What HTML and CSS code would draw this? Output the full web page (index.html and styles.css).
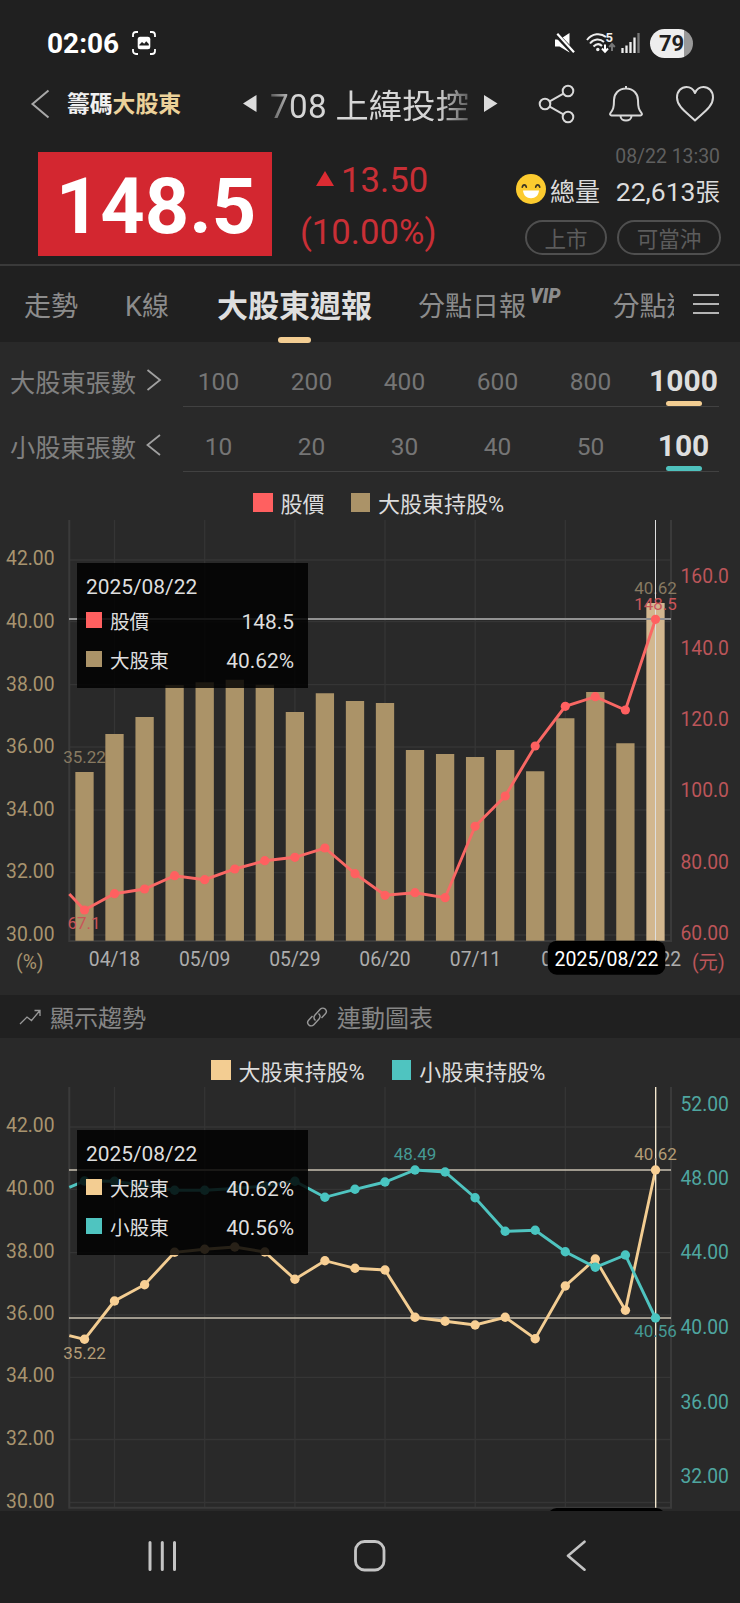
FILE: index.html
```html
<!DOCTYPE html>
<html lang="zh-Hant">
<head>
<meta charset="UTF-8">
<meta name="viewport" content="width=device-width, initial-scale=1">
<title>籌碼大股東</title>
<link rel="stylesheet" href="styles.css">
</head>
<body>
<div class="statusbar">
  <span class="clock">02:06</span>
  <svg class="shot-icon" width="24" height="24" viewBox="0 0 24 24">
    <path d="M1 6V4a3 3 0 0 1 3-3h2M18 1h2a3 3 0 0 1 3 3v2M23 18v2a3 3 0 0 1-3 3h-2M6 23H4a3 3 0 0 1-3-3v-2" fill="none" stroke="#fff" stroke-width="1.8"/>
    <rect x="5.7" y="5.8" width="12.6" height="12.4" rx="2.5" fill="#fff"/>
    <path d="M7.3 13.8l2.7-2.9 2.2 1.8 2-2.5 2.6 2.7v1.7H7.3z" fill="#202020"/>
  </svg>
  <div class="status-right">
    <svg width="20" height="22" viewBox="0 0 20 22">
      <path d="M0 7.5h4.5L14.5 1v19.5L4.5 14.5H0z" fill="#fff"/>
      <path d="M-1 0L18 20" stroke="#202020" stroke-width="5"/>
      <path d="M2.3 1.8L19 20.3" stroke="#fff" stroke-width="2.2"/>
    </svg>
    <svg class="wifi" width="31" height="22" viewBox="0 0 31 22">
      <path d="M1 8C6 1 15 .8 20 5M4 11.5c4-5 10-5 14-1.5M7.5 14.5c3-3 6-3 8.5-.5" fill="none" stroke="#eee" stroke-width="2"/>
      <circle cx="11.8" cy="17.5" r="1.7" fill="#eee"/>
      <path d="M19 12.5v6.5M16 16.5l3 3.3 3-3.3" fill="none" stroke="#fff" stroke-width="2"/>
      <path d="M26 19v-6.5M23.2 15l2.8-3 2.8 3" fill="none" stroke="#777" stroke-width="2"/>
      <text x="19.5" y="10" class="wifi-num">5</text>
    </svg>
    <svg class="signal" width="19" height="20" viewBox="0 0 19 20">
      <path d="M1.5 15v5M5.5 12.5V20M9.5 9v11M13.5 4.5V20" stroke="#eee" stroke-width="2.3"/>
      <path d="M17.5 0v20" stroke="#777" stroke-width="2.3"/>
    </svg>
    <span class="battery">79</span>
  </div>
</div>

<div class="titlebar">
  <svg class="back" width="20" height="30" viewBox="0 0 20 30"><path d="M18.500 1.500L2.500 15l16 13.500" fill="none" stroke="#a8a8a8" stroke-width="2"/></svg>
  <div class="logo">籌碼<span>大股東</span></div>
  <svg class="prev" width="14" height="17" viewBox="0 0 14 17"><path d="M0 8.500L13.500 0v17z" fill="#dcdcdc"/></svg>
  <div class="stock-name">708 上緯投控</div>
  <svg class="next" width="14" height="17" viewBox="0 0 14 17"><path d="M13.500 8.500L0 0v17z" fill="#dcdcdc"/></svg>
  <svg class="share" width="38" height="40" viewBox="0 0 38 40" fill="none" stroke="#d8d8d8" stroke-width="2">
    <circle cx="7" cy="20" r="5.300"/><circle cx="30" cy="7" r="5.300"/><circle cx="30" cy="33" r="5.300"/>
    <path d="M11.700 17.400l13.700-7.700M11.700 22.600l13.700 7.700"/>
  </svg>
  <svg class="bell" width="34" height="38" viewBox="0 0 34 38" fill="none" stroke="#d8d8d8" stroke-width="2" stroke-linejoin="round">
    <path d="M17 3.500C9.500 3.500 5 9 5 15c0 8-1 9.500-3.500 13-.8 1.300-.3 2.500 1 2.500h29c1.300 0 1.800-1.200 1-2.500C30 24.500 29 23 29 15c0-6-4.500-11.500-12-11.500zM17 3.500V1M11.500 31c0 6 11 6 11 0"/>
  </svg>
  <svg class="heart" width="40" height="38" viewBox="0 0 40 38" fill="none" stroke="#d8d8d8" stroke-width="2" stroke-linejoin="round">
    <path d="M20 35.500C11 27 2 21.500 2 12.500 2 6 6.500 2 11.500 2c4 0 7 2.500 8.500 6 1.500-3.500 4.500-6 8.500-6C33.500 2 38 6 38 12.500 38 21.500 29 27 20 35.500z"/>
  </svg>
</div>

<div class="quote">
  <div class="price">148.5</div>
  <div class="change">
    <div><i class="up"></i>13.50</div>
    <div class="pct">(10.00%)</div>
  </div>
  <div class="info">
    <div class="time">08/22 13:30</div>
    <div class="volume">
      <svg width="30" height="30" viewBox="0 0 30 30">
        <circle cx="15" cy="15" r="15" fill="#fccb2f"/>
        <path d="M6.300 13.200c.6-3 3.400-3 4 0M19.700 13.200c.6-3 3.400-3 4 0" fill="none" stroke="#3d3523" stroke-width="1.700" stroke-linecap="round"/>
        <path d="M7 16.500h16c-.5 5-3.500 7.700-8 7.700s-7.500-2.700-8-7.700z" fill="#fff"/>
      </svg>
      <span>總量</span><span class="vol-num"><b>22,613</b>張</span>
    </div>
    <div class="tags"><span class="tag">上市</span><span class="tag wide">可當沖</span></div>
  </div>
</div>

<div class="tabs">
  <span class="tab t1">走勢</span>
  <span class="tab t2">K線</span>
  <span class="tab t3 active">大股東週報</span>
  <span class="tab t4">分點日報<sup>VIP</sup></span>
  <span class="tab t5">分點進出</span>
  <svg class="menu" width="28" height="20" viewBox="0 0 28 20"><path d="M1 1h26M1 10h26M1 19h26" stroke="#b4b4b4" stroke-width="2"/></svg>
</div>

<div class="selectors">
  <div class="selector">
    <span class="sel-label">大股東張數</span>
    <svg class="chev" width="16" height="22" viewBox="0 0 16 22"><path d="M1.500 1l12.500 10L1.500 21" fill="none" stroke="#a0a0a0" stroke-width="1.800"/></svg>
    <div class="track">
      <span>100</span><span>200</span><span>400</span><span>600</span><span>800</span><span class="on gold">1000</span>
    </div>
  </div>
  <div class="selector">
    <span class="sel-label">小股東張數</span>
    <svg class="chev" width="16" height="22" viewBox="0 0 16 22"><path d="M14 1L1.500 11 14 21" fill="none" stroke="#a0a0a0" stroke-width="1.800"/></svg>
    <div class="track">
      <span>10</span><span>20</span><span>30</span><span>40</span><span>50</span><span class="on teal">100</span>
    </div>
  </div>
</div>

<div class="legend first">
  <i class="box red"></i><span>股價</span>
  <i class="box tan"></i><span>大股東持股%</span>
</div>
<div class="chart chart1">
  <svg width="740" height="474" viewBox="0 0 740 474">
    <g class="grid">
      <path d="M70 40h600M70 101.700h600M70 164.700h600M70 227h600M70 290h600M70 352.700h600M70 415h600"/>
      <path d="M114.500 0v420M204.700 0v420M294.900 0v420M385 0v420M475.200 0v420M565.300 0v420"/>
    </g>
    <path class="axis" d="M69.300 0v421H671V0"/>
    <g class="val tan-dim"><text x="84.500" y="243.300">35.22</text><text x="655.500" y="74">40.62</text></g>
    <g class="bars">
      <path d="M84.500 252V420.700M114.500 214V420.700M144.600 197V420.700M174.600 165V420.700M204.700 162.300V420.700M234.800 159.700V420.700M264.800 164.700V420.700M294.900 192V420.700M324.900 173.300V420.700M355 181V420.700"/>
      <path d="M385 183V420.700M415 230V420.700M445.100 234V420.700M475.100 237V420.700M505.200 230V420.700M535.200 251.300V420.700M565.300 198.300V420.700M595.300 172V420.700M625.400 223.300V420.700"/>
      <path class="hot" d="M655.500 83V420.700"/>
    </g>
    <path class="cursor-h" d="M69 99H671"/>
    <path class="cursor-v" d="M655.500 0V420.700"/>
    <polyline class="line red-line" points="69.300,374 84.500,390 114.500,373.700 144.600,369 174.600,355.700 204.700,359.700 234.800,349 264.800,340.700 294.900,337.300 324.900,328 355,353.700 385,375.300 415,372.700 445.100,377.700 475.100,306.300 505.200,276 535.200,226 565.300,186.300 595.300,176.700 625.400,190 655.500,99.300"/>
    <g class="red-dots">
      <circle cx="84.500" cy="390" r="4.600"/><circle cx="114.500" cy="373.700" r="4.600"/><circle cx="144.600" cy="369" r="4.600"/><circle cx="174.600" cy="355.700" r="4.600"/>
      <circle cx="204.700" cy="359.700" r="4.600"/><circle cx="234.800" cy="349" r="4.600"/><circle cx="264.800" cy="340.700" r="4.600"/><circle cx="294.900" cy="337.300" r="4.600"/>
      <circle cx="324.900" cy="328" r="4.600"/><circle cx="355" cy="353.700" r="4.600"/><circle cx="385" cy="375.300" r="4.600"/><circle cx="415" cy="372.700" r="4.600"/>
      <circle cx="445.100" cy="377.700" r="4.600"/><circle cx="475.100" cy="306.300" r="4.600"/><circle cx="505.200" cy="276" r="4.600"/><circle cx="535.200" cy="226" r="4.600"/>
      <circle cx="565.300" cy="186.300" r="4.600"/><circle cx="595.300" cy="176.700" r="4.600"/><circle cx="625.400" cy="190" r="4.600"/><circle cx="655.500" cy="99.300" r="4.600"/>
    </g>
    <g class="val red-dim"><text x="84" y="408.700">67.1</text><text x="655.500" y="89.700">148.5</text></g>
    <g class="tick left">
      <text x="54.500" y="45.300">42.00</text><text x="54.500" y="107.700">40.00</text><text x="54.500" y="170.500">38.00</text><text x="54.500" y="232.700">36.00</text>
      <text x="54.500" y="295.700">34.00</text><text x="54.500" y="358.300">32.00</text><text x="54.500" y="420.700">30.00</text><text x="43.500" y="449">(%)</text>
    </g>
    <g class="tick right red-tick">
      <text x="680.500" y="63.300">160.0</text><text x="680.500" y="134.700">140.0</text><text x="680.500" y="206">120.0</text><text x="680.500" y="277.300">100.0</text>
      <text x="680.500" y="349.300">80.00</text><text x="680.500" y="420.300">60.00</text><text x="692" y="448.500">(元)</text>
    </g>
    <g class="tick dates">
      <text x="114.500" y="446">04/18</text><text x="204.700" y="446">05/09</text><text x="294.900" y="446">05/29</text><text x="385" y="446">06/20</text>
      <text x="475.500" y="446">07/11</text><text x="567" y="446">08/01</text><text x="655.500" y="446">08/22</text>
    </g>
    <rect x="547.700" y="420.700" width="117.600" height="34" rx="9"/>
    <text class="pill-text" x="606.500" y="445.700">2025/08/22</text>
  </svg>
  <div class="tooltip">
    <p>2025/08/22</p>
    <div><i class="red"></i><span>股價</span><b>148.5</b></div>
    <div><i class="tan"></i><span>大股東</span><b>40.62%</b></div>
  </div>
</div>

<div class="toolbar">
  <svg width="22" height="16" viewBox="0 0 22 16"><path d="M1 15l7-7 4.500 3.500L20.500 2M15.500 1.500H21V7" fill="none" stroke="#999" stroke-width="1.300"/></svg>
  <span>顯示趨勢</span>
  <svg class="link" width="22" height="22" viewBox="0 0 22 22" fill="none" stroke="#999" stroke-width="1.400">
    <path d="M9.500 14.500a4 4 0 0 1-.5-5.500l5.200-5.700c3.300-3.500 8.300 1.300 5 4.800L15.500 12M12.500 7.500a4 4 0 0 1 .5 5.500l-5.200 5.700c-3.300 3.500-8.300-1.300-5-4.800L6.500 10"/>
  </svg>
  <span>連動圖表</span>
</div>

<div class="legend second">
  <i class="box gold"></i><span>大股東持股%</span>
  <i class="box teal"></i><span>小股東持股%</span>
</div>
<div class="chart chart2">
  <svg width="740" height="424" viewBox="0 0 740 424">
    <g class="grid">
      <path d="M70 40h600M70 102.300h600M70 165.700h600M70 228h600M70 290.300h600M70 352.500h600M70 415.500h600"/>
      <path d="M114.500 0v420M204.700 0v420M294.900 0v420M385 0v420M475.200 0v420M565.300 0v420"/>
    </g>
    <path class="axis" d="M69.300 0v420.700H671V0"/>
    <path class="cursor-gold" d="M69 83H671M69 231H671"/>
    <polyline class="line gold-line" points="69.300,248.700 84.500,252.300 114.500,214 144.600,197.700 174.600,165.300 204.700,162.300 234.800,160 264.800,165 294.900,192.300 324.900,173.700 355,181.300 385,183 415,230.300 445.100,234.300 475.100,238 505.200,230.300 535.200,251.700 565.300,199 595.300,172 625.400,223.300 655.500,83"/>
    <g class="gold-dots">
      <circle cx="84.500" cy="252.300" r="4.700"/><circle cx="114.500" cy="214" r="4.700"/><circle cx="144.600" cy="197.700" r="4.700"/><circle cx="174.600" cy="165.300" r="4.700"/>
      <circle cx="204.700" cy="162.300" r="4.700"/><circle cx="234.800" cy="160" r="4.700"/><circle cx="264.800" cy="165" r="4.700"/><circle cx="294.900" cy="192.300" r="4.700"/>
      <circle cx="324.900" cy="173.700" r="4.700"/><circle cx="355" cy="181.300" r="4.700"/><circle cx="385" cy="183" r="4.700"/><circle cx="415" cy="230.300" r="4.700"/>
      <circle cx="445.100" cy="234.300" r="4.700"/><circle cx="475.100" cy="238" r="4.700"/><circle cx="505.200" cy="230.300" r="4.700"/><circle cx="535.200" cy="251.700" r="4.700"/>
      <circle cx="565.300" cy="199" r="4.700"/><circle cx="595.300" cy="172" r="4.700"/><circle cx="625.400" cy="223.300" r="4.700"/>
    </g>
    <polyline class="line teal-line" points="69.300,100.300 84.500,94 114.500,94.300 144.600,98.500 174.600,103.300 204.700,103.300 234.800,101.500 264.800,99 294.900,94.300 324.900,110.300 355,102.300 385,95 415,83 445.100,85 475.100,110.700 505.200,144.300 535.200,143.300 565.300,164.700 595.300,180.300 625.400,168 655.500,231"/>
    <path class="cursor-v2" d="M655.700 0V420.700"/>
    <g class="teal-dots">
      <circle cx="84.500" cy="94" r="4.700"/><circle cx="114.500" cy="94.300" r="4.700"/><circle cx="144.600" cy="98.500" r="4.700"/><circle cx="174.600" cy="103.300" r="4.700"/>
      <circle cx="204.700" cy="103.300" r="4.700"/><circle cx="234.800" cy="101.500" r="4.700"/><circle cx="264.800" cy="99" r="4.700"/><circle cx="294.900" cy="94.300" r="4.700"/>
      <circle cx="324.900" cy="110.300" r="4.700"/><circle cx="355" cy="102.300" r="4.700"/><circle cx="385" cy="95" r="4.700"/><circle cx="415" cy="83" r="4.700"/>
      <circle cx="445.100" cy="85" r="4.700"/><circle cx="475.100" cy="110.700" r="4.700"/><circle cx="505.200" cy="144.300" r="4.700"/><circle cx="535.200" cy="143.300" r="4.700"/>
      <circle cx="565.300" cy="164.700" r="4.700"/><circle cx="595.300" cy="180.300" r="4.700"/><circle cx="625.400" cy="168" r="4.700"/><circle cx="655.500" cy="231" r="4.700"/>
    </g>
    <circle class="gold-dots" cx="655.500" cy="83" r="4.700"/>
    <g class="val gold-dim"><text x="84.500" y="271.700">35.22</text><text x="655.500" y="73.300">40.62</text></g>
    <g class="val teal-dim"><text x="415" y="73.300">48.49</text><text x="655.500" y="250.300">40.56</text></g>
    <g class="tick left">
      <text x="54.500" y="45.300">42.00</text><text x="54.500" y="107.700">40.00</text><text x="54.500" y="170.500">38.00</text><text x="54.500" y="233">36.00</text>
      <text x="54.500" y="295.300">34.00</text><text x="54.500" y="358.300">32.00</text><text x="54.500" y="420.700">30.00</text>
    </g>
    <g class="tick right teal-tick">
      <text x="680.500" y="23.700">52.00</text><text x="680.500" y="97.700">48.00</text><text x="680.500" y="172">44.00</text><text x="680.500" y="247">40.00</text>
      <text x="680.500" y="321.700">36.00</text><text x="680.500" y="396.300">32.00</text>
    </g>
    <rect x="547.700" y="421" width="117.600" height="34" rx="9"/>
  </svg>
  <div class="tooltip">
    <p>2025/08/22</p>
    <div><i class="gold"></i><span>大股東</span><b>40.62%</b></div>
    <div><i class="teal"></i><span>小股東</span><b>40.56%</b></div>
  </div>
</div>

<div class="navbar">
  <svg width="30" height="32" viewBox="0 0 30 32"><path d="M2 2.500v27M14.300 2.500v27M26.500 2.500v27" stroke="#c4c4c4" stroke-width="3" stroke-linecap="round"/></svg>
  <svg class="home" width="32" height="32" viewBox="0 0 32 32"><rect x="1.500" y="1.500" width="28.500" height="28.500" rx="9" fill="none" stroke="#c4c4c4" stroke-width="2.800"/></svg>
  <svg class="nav-back" width="21" height="32" viewBox="0 0 21 32"><path d="M18.500 1.700L2 15.700l16.500 14" fill="none" stroke="#c4c4c4" stroke-width="2.600" stroke-linecap="round" stroke-linejoin="round"/></svg>
</div>
</body>
</html>
```
FILE: styles.css
```css
* {
    box-sizing: border-box;
}

body {
    margin: 0;
    width: 740px;
    height: 1603px;
    overflow: hidden;
    background: #292929;
    color: #dcdcdc;
    font-family: Roboto, "Noto Sans CJK TC", sans-serif;
}

svg {
    display: block;
    flex: none;
}

/* Status bar */
.statusbar {
    display: flex;
    align-items: center;
    height: 76px;
    padding: 10px 47px 0 47px;
    background: #202020;
}

.clock {
    font-size: 28px;
    font-weight: 700;
    color: #fff;
}

.shot-icon {
    margin-left: 13px;
}

.status-right {
    display: flex;
    align-items: center;
    margin-left: auto;
}

.wifi {
    margin-left: 11px;
}

.wifi-num {
    font: 700 13px Roboto, sans-serif;
    fill: #eee;
}

.signal {
    margin: 0 10px 0 4px;
}

.battery {
    width: 43px;
    height: 29px;
    border-radius: 15px;
    background: linear-gradient(90deg, #eee 79%, #999 79%);
    color: #202020;
    font-size: 22px;
    font-weight: 700;
    line-height: 29px;
    text-align: center;
}

/* Title bar */
.titlebar {
    display: flex;
    align-items: center;
    height: 56px;
    padding-left: 30px;
    background: #202020;
}

.logo {
    margin: -4px 0 0 17px;
    width: 115px;
    font-size: 22.800px;
    font-weight: 700;
    color: #f0f0f0;
    white-space: nowrap;
}

.logo span {
    color: #ecd29a;
}

.prev {
    margin: -2px 0 0 61px;
}

.stock-name {
    width: 200px;
    height: 50px;
    margin-left: 13px;
    overflow: hidden;
    color: #d6d6d6;
    font-size: 33.200px;
    line-height: 56px;
    letter-spacing: 0.300px;
    white-space: nowrap;
    -webkit-mask-image: linear-gradient(90deg, rgba(0,0,0,.3), #000 24px, #000 168px, rgba(0,0,0,.3));
    mask-image: linear-gradient(90deg, rgba(0,0,0,.3), #000 24px, #000 168px, rgba(0,0,0,.3));
}

.next {
    margin: -2px 0 0 14px;
}

.share {
    margin-left: 40px;
}

.bell {
    margin-left: 33px;
}

.heart {
    margin-left: 32px;
}

/* Quote */
.quote {
    display: flex;
    height: 134px;
    padding: 20px 20px 0 38px;
    background: #202020;
    border-bottom: 2px solid #3a3a3a;
}

.price {
    width: 234px;
    height: 104px;
    padding-left: 2px;
    background: #d32730;
    color: #fff;
    font-size: 77.500px;
    font-weight: 700;
    line-height: 110px;
    text-align: center;
}

.change {
    width: 180px;
    padding-left: 28px;
    color: #c92f36;
    font-size: 34.700px;
    line-height: 52px;
}

.change div:first-child {
    display: flex;
    padding: 1px 0 0 16px;
    align-items: center;
    height: 55px;
}

.change .pct {
    line-height: 50px;
}

.up {
    margin: -3px 7px 0 0;
    border: 9px solid transparent;
    border-top: 0;
    border-bottom: 15px solid #dc2b32;
}

.info {
    flex: 1;
    text-align: right;
}

.time {
    margin-top: -7px;
    color: #5f5f5f;
    font-size: 19.400px;
    line-height: 24px;
}

.volume {
    display: flex;
    align-items: center;
    justify-content: flex-end;
    height: 40px;
    margin-top: 1px;
    font-size: 25px;
}

.volume svg {
    margin: -2px 4px 0 0;
}

.vol-num {
    width: 106px;
    margin-left: 14px;
    font-size: 24.500px;
    white-space: nowrap;
}

.vol-num b {
    font-size: 26.500px;
    font-weight: 400;
}

.tags {
    display: flex;
    justify-content: flex-end;
    gap: 10px;
    margin: 10px -1px 0 0;
}

.tag {
    width: 82px;
    height: 35px;
    border: 2px solid #4f4f4f;
    border-radius: 18px;
    color: #5c5c5c;
    font-size: 21.500px;
    line-height: 36px;
    text-align: center;
}

.tag.wide {
    width: 104px;
}

/* Tabs */
.tabs {
    display: flex;
    align-items: center;
    height: 76px;
    padding-left: 24px;
    background: #202020;
    color: #8c8c8c;
    font-size: 27px;
    line-height: 76px;
    white-space: nowrap;
}

.tab {
    height: 76px;
    line-height: 83px;
}

.t2 {
    margin-left: 47px;
}

.t3 {
    margin-left: 48px;
}

.t4 {
    margin-left: 46px;
    display: flex;
}

.t5 {
    width: 61px;
    margin-left: 52px;
    overflow: hidden;
}

.tab.active {
    position: relative;
    color: #dedede;
    font-size: 31px;
    font-weight: 700;
    line-height: 82px;
}

.tab.active::after {
    content: "";
    position: absolute;
    left: 50%;
    bottom: -1px;
    width: 33px;
    height: 6px;
    margin-left: -16px;
    border-radius: 3px;
    background: #f3cd92;
}

.tab sup {
    margin-left: 4px;
    font-size: 19.500px;
    font-weight: 900;
    font-style: italic;
    line-height: 61px;
}

.menu {
    margin: -1px 0 0 18px;
}

/* Selectors */
.selectors {
    height: 143px;
}

.selector {
    display: flex;
    height: 64.500px;
    padding-left: 10px;
}

.sel-label {
    width: 136px;
    color: #808080;
    font-size: 25.200px;
    line-height: 83px;
}

.chev {
    margin-top: 27px;
}

.track {
    display: grid;
    grid-template-columns: repeat(6, 93px);
    justify-content: center;
    width: 536px;
    height: 65px;
    margin-left: 21px;
    border-bottom: 1.500px solid #414141;
    color: #757575;
    font-size: 24.500px;
    line-height: 80px;
    text-align: center;
}

.track .on {
    position: relative;
    height: 64px;
    color: #dedede;
    font-size: 30px;
    font-weight: 700;
    line-height: 77px;
}

.track .on::after {
    content: "";
    position: absolute;
    left: 29px;
    bottom: 0;
    width: 36px;
    height: 5px;
    border-radius: 3px;
}

.track .gold::after {
    background: #f3cd92;
}

.track .teal::after {
    background: #4fc1bd;
}

/* Legends */
.legend {
    display: flex;
    align-items: center;
    height: 35px;
    font-size: 22px;
    line-height: 35px;
    white-space: nowrap;
}

.legend span {
    margin: 4px 27px 0 8px;
}

.first span {
    margin-right: 26px;
}

.box {
    width: 19.500px;
    height: 19.500px;
}

.first {
    padding-left: 253px;
}

.second {
    height: 49px;
    padding: 15px 0 0 211px;
}

i.red { background: #ff6060; }
i.tan { background: #ab9368; }
i.gold { background: #f3cd92; }
i.teal { background: #4fc4c0; }

/* Charts */
.chart {
    position: relative;
}

.chart1 {
    height: 475px;
}

.chart2 {
    height: 424px;
}

.grid path {
    stroke: #353535;
    stroke-width: 1.300;
    fill: none;
}

.axis {
    stroke: #3a3a3a;
    stroke-width: 2;
    fill: none;
}

.bars path {
    stroke: #ab9368;
    stroke-width: 18.300;
}

.bars .hot {
    stroke: #d2b78f;
}

.line {
    fill: none;
    stroke-width: 2.900;
}

.red-line { stroke: #f96864; }
.gold-line { stroke: #f3cd92; }
.teal-line { stroke: #4fc4c0; }
.red-dots { fill: #ff6060; }
.gold-dots { fill: #f8cf94; }
.teal-dots { fill: #49c5c1; }

.cursor-h {
    stroke: #929292;
    stroke-width: 2;
}

.cursor-v {
    stroke: #dedede;
    stroke-width: 1;
}

.cursor-gold {
    stroke: #c8c0b0;
    stroke-width: 1.500;
}

.cursor-v2 {
    stroke: #fff2d8;
    stroke-width: 1.300;
}

.val {
    font-size: 17px;
    text-anchor: middle;
}

.tan-dim { fill: #877a62; }
.red-dim { fill: #c95558; }
.gold-dim { fill: #b39c76; }
.teal-dim { fill: #459a94; }

.tick {
    font-size: 19.300px;
}

.left {
    fill: #a8946f;
    text-anchor: end;
}

.red-tick { fill: #bb5559; }
.teal-tick { fill: #4fa6a0; }

.dates {
    fill: #adadad;
    text-anchor: middle;
}

.pill-text {
    fill: #fff;
    font-size: 19.500px;
    text-anchor: middle;
}

.tooltip {
    position: absolute;
    left: 77px;
    top: 42.500px;
    width: 231px;
    height: 125.500px;
    padding: 10px 14px 0 9px;
    background: rgba(0, 0, 0, 0.840);
    color: #dedede;
    font-size: 20.900px;
}

.tooltip p {
    margin: 0;
    line-height: 29px;
}

.tooltip div {
    display: flex;
    align-items: center;
    height: 39px;
}

.tooltip i {
    width: 16px;
    height: 16px;
    margin: -2px 8px 0 0;
}

.tooltip span {
    margin-top: -1px;
    font-size: 19.600px;
}

.tooltip b {
    margin: 1px 0 0 auto;
    font-weight: 400;
}

/* Toolbar */
.toolbar {
    display: flex;
    align-items: center;
    height: 43px;
    padding-left: 19px;
    background: #202020;
    color: #868686;
    font-size: 24px;
    line-height: 48px;
}

.toolbar span {
    margin: 5px 0 0 9px;
}

.toolbar .link {
    margin-left: 160px;
}

/* Bottom navigation */
.navbar {
    display: flex;
    height: 92px;
    padding: 29px 0 0 148px;
    background: #202020;
}

.home {
    margin-left: 176px;
}

.nav-back {
    margin-left: 180px;
}
```
